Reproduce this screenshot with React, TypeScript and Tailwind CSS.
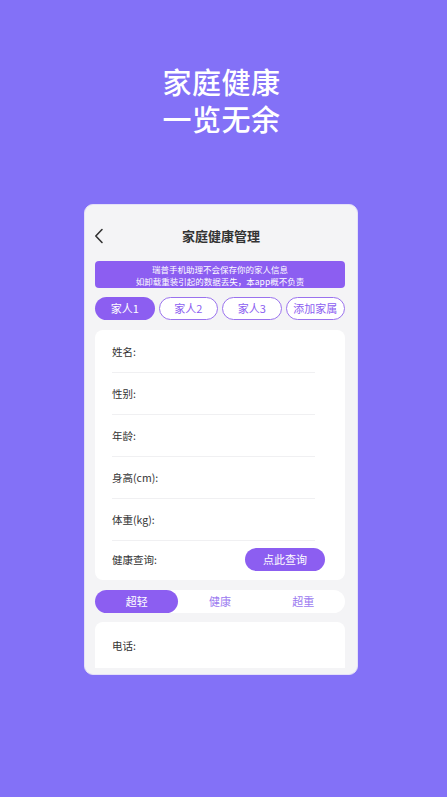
import type { ReactElement } from "react";

const FONT = "font-['Noto_Sans_CJK_SC','Noto_Sans',sans-serif]";

const fields = ["姓名:", "性别:", "年龄:", "身高(cm):", "体重(kg):"];
const members = ["家人1", "家人2", "家人3", "添加家属"];
const levels = ["超轻", "健康", "超重"];

function BackIcon(): ReactElement {
  return (
    <svg width="10" height="16" viewBox="0 0 10 16" fill="none">
      <path d="M8 1.5 1.8 8 8 14.5" stroke="#333" strokeWidth="1.6" strokeLinecap="round" strokeLinejoin="round" />
    </svg>
  );
}

export default function App(): ReactElement {
  return (
    <div className={`${FONT} flex h-[797px] w-[447px] flex-col items-center overflow-hidden bg-[#8371f7]`}>
      <div className="mr-[4px] mt-[63px] flex flex-col items-center text-[29px] font-medium leading-[37px] tracking-[0.5px] text-white">
        <span>家庭健康</span>
        <span>一览无余</span>
      </div>

      <div className="mr-[5px] mt-[67px] flex h-[471px] w-[274px] flex-col overflow-hidden rounded-[9px] border border-[#e4e0f8] bg-[#f4f4f6] pb-[6px] pl-[10px] pr-[12px]">
        <div className="relative flex h-[56px] shrink-0 items-center justify-center">
          <span className="absolute left-[-1px] top-[23px]">
            <BackIcon />
          </span>
          <span className="pl-[2px] pt-[5px] text-[13px] font-bold text-[#333]">家庭健康管理</span>
        </div>

        <div className="flex h-[27px] shrink-0 flex-col items-center justify-center rounded-[4px] bg-[#8c5ef1] text-[8.5px] leading-[12px] text-white">
          <span>瑞普手机助理不会保存你的家人信息</span>
          <span>如卸载重装引起的数据丢失，本app概不负责</span>
        </div>

        <div className="mt-[9px] grid shrink-0 grid-cols-4 gap-[4px]">
          {members.map((m, i) => (
            <span
              key={m}
              className={
                i === 0
                  ? "flex h-[23px] items-center justify-center rounded-full bg-[#8c5ef1] text-[11px] text-white"
                  : "flex h-[23px] items-center justify-center rounded-full border border-[#9a72ee] bg-white text-[11px] text-[#8c5ef1]"
              }
            >
              {m}
            </span>
          ))}
        </div>

        <div className="mt-[10px] flex shrink-0 flex-col rounded-[8px] bg-white pl-[17px] pr-[20px] pt-px">
          {fields.map((f) => (
            <div key={f} className="flex h-[42px] flex-col">
              <span className="flex flex-1 items-center text-[10.5px] text-[#333]">{f}</span>
              <span className="mr-[10px] h-px bg-[#f0f0f2]" />
            </div>
          ))}
          <div className="flex h-[39px] items-center justify-between pb-[2px]">
            <span className="text-[10.5px] text-[#333]">健康查询:</span>
            <span className="flex h-[23px] w-[80px] items-center justify-center rounded-full bg-[#8c5ef1] text-[11px] text-white">
              点此查询
            </span>
          </div>
        </div>

        <div className="mt-[10px] grid h-[23px] shrink-0 grid-cols-3 rounded-full bg-white">
          {levels.map((l, i) => (
            <span
              key={l}
              className={
                i === 0
                  ? "flex items-center justify-center rounded-full bg-[#8c5ef1] text-[11px] text-white"
                  : "flex items-center justify-center text-[11px] text-[#9b7af0]"
              }
            >
              {l}
            </span>
          ))}
        </div>

        <div className="mt-[9px] flex flex-1 flex-col rounded-t-[8px] bg-white pl-[17px] pr-[20px] pt-[16px]">
          <span className="text-[10.5px] text-[#333]">电话:</span>
        </div>
      </div>
    </div>
  );
}
